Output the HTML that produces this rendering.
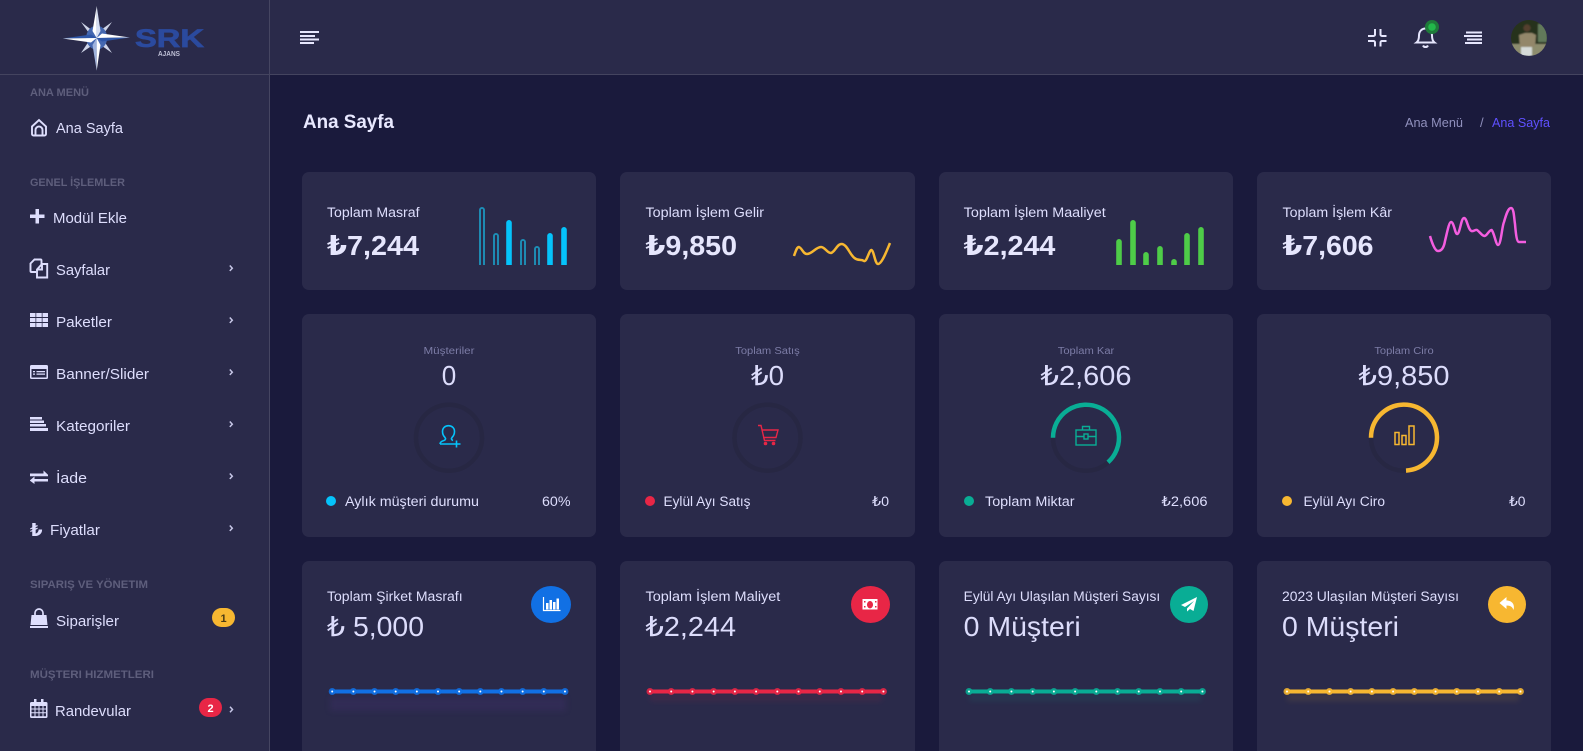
<!DOCTYPE html>
<html lang="tr"><head><meta charset="utf-8"><title>Ana Sayfa</title>
<style>
html,body{margin:0;padding:0;width:1583px;height:751px;overflow:hidden;background:#1a1a3c}
body{position:relative;font-family:"Liberation Sans","DejaVu Sans",sans-serif}
.side{position:absolute;left:0;top:0;width:269px;height:751px;background:#2a2a4a;border-right:1px solid rgba(255,255,255,.13)}
.head{position:absolute;left:270px;top:0;width:1313px;height:74px;background:#2a2a4a}
.hl{position:absolute;left:0;top:74px;width:1583px;height:1px;background:#44445f}
.c{position:absolute;background:#2a2a4a;border-radius:7px}
svg{position:absolute;left:0;top:0}
text{font-family:"Liberation Sans","DejaVu Sans",sans-serif;fill:#dedefd}
.s{font-size:14.5px}.sec{font-size:11px;font-weight:700;fill:#5e5e7c}
.t{font-size:13.5px}.v{font-size:28px;font-weight:700;fill:#e6e6fd}.n{font-size:28px;fill:#dcdcfb}
.l{font-size:10px;fill:#7c7ca6}
</style></head><body>
<div class="side"></div><div class="head"></div><div class="hl"></div>
<div class="c" style="left:302px;top:172px;width:294px;height:118px"></div>
<div class="c" style="left:620px;top:172px;width:295px;height:118px"></div>
<div class="c" style="left:939px;top:172px;width:294px;height:118px"></div>
<div class="c" style="left:1257px;top:172px;width:294px;height:118px"></div>
<div class="c" style="left:302px;top:314px;width:294px;height:223px"></div>
<div class="c" style="left:620px;top:314px;width:295px;height:223px"></div>
<div class="c" style="left:939px;top:314px;width:294px;height:223px"></div>
<div class="c" style="left:1257px;top:314px;width:294px;height:223px"></div>
<div class="c" style="left:302px;top:561px;width:294px;height:200px"></div>
<div class="c" style="left:620px;top:561px;width:295px;height:200px"></div>
<div class="c" style="left:939px;top:561px;width:294px;height:200px"></div>
<div class="c" style="left:1257px;top:561px;width:294px;height:200px"></div>
<svg width="1583" height="751" viewBox="0 0 1583 751" xmlns="http://www.w3.org/2000/svg">
<defs>
<clipPath id="bc"><rect x="470" y="200" width="800" height="65"/></clipPath>
<clipPath id="av"><circle cx="1529" cy="38" r="18"/></clipPath>
<filter id="bl" x="-20%" y="-100%" width="140%" height="300%"><feGaussianBlur stdDeviation="3"/></filter>
<filter id="av1" x="-10%" y="-10%" width="120%" height="120%"><feGaussianBlur stdDeviation=".8"/></filter>
</defs>

<!-- logo -->
<g>
<g fill="#cfd5e8"><polygon points="81,22 97,34 94,40"/><polygon points="112,22 100,39 94,35"/><polygon points="81,53 93,35 99,41"/><polygon points="112,53 95,41 100,35"/></g>
<ellipse cx="96.700" cy="37.700" rx="10.500" ry="12" fill="#4467b0"/>
<polygon points="96.700,6 92.500,31 96.700,38" fill="#fff"/><polygon points="96.700,6 100.500,31 96.700,38" fill="#d5def2"/>
<polygon points="96.700,70.600 92.500,45 96.700,38" fill="#9fb3dd"/><polygon points="96.700,70.600 100.500,45 96.700,38" fill="#fff"/>
<polygon points="62.700,38.500 91,34.500 96.700,38" fill="#2e56a8"/><polygon points="62.700,38.500 91,42.500 96.700,38" fill="#fff"/>
<polygon points="130,37.500 102,33.500 96.700,38" fill="#fff"/><polygon points="130,37.500 102,41.500 96.700,38" fill="#2e56a8"/>
</g>
<text x="135" y="47" font-size="25" font-weight="700" textLength="69" lengthAdjust="spacingAndGlyphs" style="fill:#2b4a9e;stroke:#2b4a9e;stroke-width:.7">SRK</text>
<text x="158" y="56" font-size="7" font-weight="700" textLength="22" lengthAdjust="spacingAndGlyphs" style="fill:#bfc0d6">AJANS</text>

<!-- sidebar text -->
<text class="sec" x="30" y="96" textLength="59" lengthAdjust="spacingAndGlyphs">ANA MENÜ</text>
<text class="s" x="56" y="133" textLength="67" lengthAdjust="spacingAndGlyphs">Ana Sayfa</text>
<text class="sec" x="30" y="186" textLength="95" lengthAdjust="spacingAndGlyphs">GENEL İŞLEMLER</text>
<text class="s" x="53" y="223" textLength="74" lengthAdjust="spacingAndGlyphs">Modül Ekle</text>
<text class="s" x="56" y="275" textLength="54" lengthAdjust="spacingAndGlyphs">Sayfalar</text>
<text class="s" x="56" y="327" textLength="56" lengthAdjust="spacingAndGlyphs">Paketler</text>
<text class="s" x="56" y="379" textLength="93" lengthAdjust="spacingAndGlyphs">Banner/Slider</text>
<text class="s" x="56" y="431" textLength="74" lengthAdjust="spacingAndGlyphs">Kategoriler</text>
<text class="s" x="56" y="483" textLength="31" lengthAdjust="spacingAndGlyphs">İade</text>
<text class="s" x="50" y="535" textLength="50" lengthAdjust="spacingAndGlyphs">Fiyatlar</text>
<text class="sec" x="30" y="588" textLength="118" lengthAdjust="spacingAndGlyphs">SIPARIŞ VE YÖNETIM</text>
<text class="s" x="56" y="626" textLength="63" lengthAdjust="spacingAndGlyphs">Siparişler</text>
<text class="sec" x="30" y="678" textLength="124" lengthAdjust="spacingAndGlyphs">MÜŞTERI HIZMETLERI</text>
<text class="s" x="55" y="716" textLength="76" lengthAdjust="spacingAndGlyphs">Randevular</text>

<!-- sidebar icons -->
<g fill="none" stroke="#dedefd" stroke-width="1.900">
<path d="M32 126.500 39 120l7 6.500V134a1.500 1.500 0 0 1-1.500 1.500h-11A1.500 1.500 0 0 1 32 134Z"/>
<path d="M35.500 135.500V130a3.500 3.500 0 0 1 7 0v5.500"/>
<path d="M36 272h-4.500a1 1 0 0 1-1-1v-7.500l4-4h6a1 1 0 0 1 1 1V264"/>
<path d="M37 269.500l5-5.500h5.200v13.500H37ZM42 264v5.500h-5"/>
<path d="M229.800 265.500l2.500 2.700-2.500 2.700M229.800 317.500l2.500 2.700-2.500 2.700M229.800 369.500l2.500 2.700-2.500 2.700M229.800 421.500l2.500 2.700-2.500 2.700M229.800 473.500l2.500 2.700-2.500 2.700M229.800 525.500l2.500 2.700-2.500 2.700M230 706.800l2.500 2.700-2.500 2.700" stroke="#c6c6e6" stroke-width="1.500"/>
</g>
<g fill="#dedefd">
<path d="M35.500 209h3.500v5.500h5.500v3.500H39v5.500h-3.500V218H30v-3.500h5.500Z"/>
<path d="M30 313h5.500v4H30zM36.250 313h5.500v4h-5.500zM42.500 313H48v4h-5.500zM30 318h5.500v4H30zM36.250 318h5.500v4h-5.500zM42.500 318H48v4h-5.500zM30 323h5.500v4H30zM36.250 323h5.500v4h-5.500zM42.500 323H48v4h-5.500z"/>
<path fill-rule="evenodd" d="M31.500 365h15a1.500 1.500 0 0 1 1.500 1.500v11a1.500 1.500 0 0 1-1.500 1.500h-15a1.500 1.500 0 0 1-1.500-1.500v-11a1.500 1.500 0 0 1 1.500-1.500ZM31.500 369v8.500h15V369ZM33 371h2v1.200h-2zM36.500 371H45v1.200h-8.500zM33 373.500h2v1.200h-2zM36.500 373.500H45v1.200h-8.500z"/>
<path d="M30 417h12v2.500H30zM30 420.500h14v2.500H30zM30 424h16v2.500H30zM30 428h18v3H30z"/>
<path d="M30 473.500H43.500V470.500L48 474.700V476.200H30ZM48 479H34.500V476.500L30 480.200V480.700L34.500 484V481.500H48Z"/>
<path d="M31.500 615h15l1 10H30.500ZM30 626h18v2H30z"/>
<path d="M35 615v-2a4 4 0 0 1 8 0v2" fill="none" stroke="#dedefd" stroke-width="1.700"/>
<path fill-rule="evenodd" d="M31.500 702H34v-3h2.500v3h4.500v-3h2.500v3h2.500a1.500 1.500 0 0 1 1.500 1.500v13a1.500 1.500 0 0 1-1.500 1.500h-14.500a1.500 1.500 0 0 1-1.500-1.500v-13a1.500 1.500 0 0 1 1.500-1.500ZM31.500 706v2.500h3V706Zm4 0v2.500h3V706Zm4 0v2.500h3V706Zm4 0v2.500h2.500V706Zm-12 3.500v2.800h3v-2.800Zm4 0v2.800h3v-2.800Zm4 0v2.800h3v-2.800Zm4 0v2.800h2.500v-2.800Zm-12 3.800v3h3v-3Zm4 0v3h3v-3Zm4 0v3h3v-3Zm4 0v3h2.500v-3Z"/>
</g>
<text x="30" y="536" font-size="18" font-weight="700">₺</text>
<rect x="212" y="608" width="23" height="19" rx="9.500" fill="#f7b731"/>
<text x="223.500" y="622" font-size="11" font-weight="700" text-anchor="middle" style="fill:#4a3a14">1</text>
<rect x="199" y="698" width="23" height="19" rx="9.500" fill="#e82646"/>
<text x="210.500" y="712" font-size="11" font-weight="700" text-anchor="middle" style="fill:#fff">2</text>

<!-- header icons -->
<g stroke="#e6e6fd" stroke-width="2" fill="none">
<path d="M300 32h19M300 36h15M300 39.500h19M300 43h14"/>
<path d="M1466 32.500h16M1464 36h18M1467 39.500h15M1465 43h17"/>
<path d="M1375 29v5.500a1.500 1.500 0 0 1-1.500 1.500H1368M1380.500 29v5.500a1.500 1.500 0 0 0 1.500 1.500h4.500M1368 41h5.500a1.500 1.500 0 0 1 1.500 1.500V46.500M1386.500 41H1382a1.500 1.500 0 0 0-1.500 1.500V46.500"/>
<path d="M1416.500 42.500c2-1.500 2.500-3.500 2.500-7 0-4 2.700-7 6.500-7s6.500 3 6.500 7c0 3.500.5 5.500 2.500 7ZM1423 45.500a2.800 2.800 0 0 0 5 0"/>
</g>
<circle cx="1432" cy="27" r="7" fill="#1f7a3a"/><circle cx="1432" cy="27" r="3.800" fill="#22b84a"/>
<g clip-path="url(#av)"><g filter="url(#av1)">
<rect x="1509" y="18" width="40" height="40" fill="#27301f"/>
<rect x="1538" y="24" width="9" height="18" fill="#62795a"/>
<rect x="1511" y="44" width="36" height="12" fill="#8d8d6e"/>
<circle cx="1527" cy="28" r="3.600" fill="#54402f"/>
<path d="M1519 35l6-2h7l4 2-1 12h-15z" fill="#93876a"/>
<rect x="1521" y="47" width="11" height="9" fill="#d6dbd9"/>
</g></g>

<!-- page title -->
<text x="303" y="128" font-size="19" font-weight="700" textLength="91" lengthAdjust="spacingAndGlyphs" style="fill:#e8e8ff">Ana Sayfa</text>
<text x="1405" y="127" font-size="13" textLength="58" lengthAdjust="spacingAndGlyphs" style="fill:#9090bd">Ana Menü</text>
<text x="1480" y="127" font-size="13" style="fill:#9090bd">/</text>
<text x="1492" y="127" font-size="13" textLength="58" lengthAdjust="spacingAndGlyphs" style="fill:#5f50ff">Ana Sayfa</text>

<!-- row 1 -->
<text class="t" x="327" y="217" textLength="92.500" lengthAdjust="spacingAndGlyphs">Toplam Masraf</text>
<text class="t" x="645.500" y="217" textLength="118.500" lengthAdjust="spacingAndGlyphs">Toplam İşlem Gelir</text>
<text class="t" x="963.700" y="217" textLength="142" lengthAdjust="spacingAndGlyphs">Toplam İşlem Maaliyet</text>
<text class="t" x="1282.500" y="217" textLength="109.500" lengthAdjust="spacingAndGlyphs">Toplam İşlem Kâr</text>
<text class="v" x="327" y="255" textLength="92" lengthAdjust="spacingAndGlyphs">₺7,244</text>
<text class="v" x="645.500" y="255" textLength="91.500" lengthAdjust="spacingAndGlyphs">₺9,850</text>
<text class="v" x="963.700" y="255" textLength="91.700" lengthAdjust="spacingAndGlyphs">₺2,244</text>
<text class="v" x="1282.500" y="255" textLength="91" lengthAdjust="spacingAndGlyphs">₺7,606</text>

<g clip-path="url(#bc)">
<g fill="none" stroke="#1d8fb8" stroke-width="1.900">
<rect x="480" y="207.900" width="4" height="64" rx="2"/>
<rect x="494" y="233.900" width="4" height="40" rx="2"/>
<rect x="521" y="239.900" width="4" height="40" rx="2"/>
<rect x="535" y="246.900" width="4" height="40" rx="2"/>
</g>
<g fill="#05c3fb">
<rect x="506.200" y="220" width="5.600" height="50" rx="2.800"/>
<rect x="547.200" y="233" width="5.600" height="40" rx="2.800"/>
<rect x="561.200" y="227" width="5.600" height="45" rx="2.800"/>
</g>
<g fill="#4ecc48">
<rect x="1116.200" y="239" width="5.600" height="30" rx="2.800"/>
<rect x="1130.200" y="220" width="5.600" height="50" rx="2.800"/>
<rect x="1143.200" y="252" width="5.600" height="20" rx="2.800"/>
<rect x="1157.200" y="246" width="5.600" height="25" rx="2.800"/>
<rect x="1171.200" y="259" width="5.600" height="15" rx="2.800"/>
<rect x="1184.200" y="233" width="5.600" height="40" rx="2.800"/>
<rect x="1198.200" y="227" width="5.600" height="45" rx="2.800"/>
</g>
</g>
<path d="M794 256C796 250 797 247 799 247 802 248 803 254 807 254 812 254 816 247 821 247 825 247 827 253 831 253 835 252 837 244 841.500 244 847 244 850 255 854.500 258 858 261 861 259 864 261 867 262 869 250 871.500 250 874 251 875 264 878 264 882 264 887 250 890 243" fill="none" stroke="#f7b731" stroke-width="2.500"/>
<path d="M1430 236C1432 243 1435 251 1438 251 1442 251 1444 247 1445 241 1447 233 1449 222 1451 222 1454 222 1455 234 1457 234 1460 234 1461 218 1464 218 1467 218 1468 230 1471.500 231 1474 232 1475 229 1477 230 1480 232 1482 236 1484.500 236 1487 236 1489 230 1491.600 230 1494 232 1496 245 1498 245 1501 245 1502 226 1504 222 1506 215 1508 208 1511 208 1514 208 1514 218 1515 224 1516 236 1517 242 1519 242L1526 242" fill="none" stroke="#f45de0" stroke-width="2.500"/>

<!-- row 2 -->
<text class="l" x="449" y="354" text-anchor="middle" textLength="51" lengthAdjust="spacingAndGlyphs">Müşteriler</text>
<text class="l" x="767.500" y="354" text-anchor="middle" textLength="64.500" lengthAdjust="spacingAndGlyphs">Toplam Satış</text>
<text class="l" x="1086" y="354" text-anchor="middle" textLength="56.500" lengthAdjust="spacingAndGlyphs">Toplam Kar</text>
<text class="l" x="1404" y="354" text-anchor="middle" textLength="59.300" lengthAdjust="spacingAndGlyphs">Toplam Ciro</text>
<text class="n" x="449" y="385" text-anchor="middle" textLength="14.500" lengthAdjust="spacingAndGlyphs">0</text>
<text class="n" x="767.500" y="385" text-anchor="middle" textLength="33" lengthAdjust="spacingAndGlyphs">₺0</text>
<text class="n" x="1086" y="385" text-anchor="middle" textLength="91" lengthAdjust="spacingAndGlyphs">₺2,606</text>
<text class="n" x="1404" y="385" text-anchor="middle" textLength="91" lengthAdjust="spacingAndGlyphs">₺9,850</text>

<g fill="none" stroke="#272743" stroke-width="4.500">
<circle cx="449" cy="437.700" r="33"/><circle cx="767.500" cy="437.700" r="33"/><circle cx="1086" cy="437.700" r="33"/><circle cx="1404" cy="437.700" r="33"/>
</g>
<path d="M1053 437.700A33 33 0 1 1 1108 462.300" fill="none" stroke="#09ad95" stroke-width="4.500"/>
<path d="M1371 437.700A33 33 0 1 1 1406 470.600" fill="none" stroke="#f7b731" stroke-width="4.500"/>

<g fill="none" stroke-width="1.400">
<g stroke="#05c3fb" stroke-width="1.600">
<path d="M440 444c0-2 1.500-2.800 4-3.500 1.500-.5 2-1.800 1-3-1.500-1.500-2.500-3.500-2.500-6 0-3.500 2.500-5.800 6-5.800s6 2.300 6 5.800c0 2.500-1 4.500-2.500 6-1 1.200-.5 2.500 1 3"/>
<path d="M440 444h15M456.500 440.500v7M453 444h7.500"/>
</g>
<g stroke="#e82646">
<path d="M758 425.500h3l3.500 15h11M762 430h16l-2 7.500h-13"/>
<circle cx="765.500" cy="443.500" r="1.100" fill="#e82646"/><circle cx="773.500" cy="443.500" r="1.100" fill="#e82646"/>
</g>
<g stroke="#09ad95">
<rect x="1076" y="430" width="20" height="15"/>
<path d="M1082.500 430v-3.500h7v3.500M1076 436.500h8M1088 436.500h8"/><rect x="1084" y="434" width="4" height="5"/>
</g>
<g stroke="#f7b731" stroke-width="1.500">
<rect x="1395" y="432.500" width="4" height="12"/><rect x="1402" y="435.500" width="4" height="9"/><rect x="1409" y="426" width="5" height="18.500"/>
</g>
</g>

<circle cx="331" cy="501" r="5" fill="#05c3fb"/><circle cx="650" cy="501" r="5" fill="#e82646"/><circle cx="969" cy="501" r="5" fill="#09ad95"/><circle cx="1287" cy="501" r="5" fill="#f7b731"/>
<text class="t" x="345" y="506" textLength="134" lengthAdjust="spacingAndGlyphs">Aylık müşteri durumu</text>
<text class="t" x="663.500" y="506" textLength="87" lengthAdjust="spacingAndGlyphs">Eylül Ayı Satış</text>
<text class="t" x="985" y="506" textLength="89.500" lengthAdjust="spacingAndGlyphs">Toplam Miktar</text>
<text class="t" x="1303.500" y="506" textLength="81.500" lengthAdjust="spacingAndGlyphs">Eylül Ayı Ciro</text>
<text class="t" x="542" y="506" textLength="28.500" lengthAdjust="spacingAndGlyphs">60%</text>
<text class="t" x="872" y="506" textLength="17" lengthAdjust="spacingAndGlyphs">₺0</text>
<text class="t" x="1161.500" y="506" textLength="46" lengthAdjust="spacingAndGlyphs">₺2,606</text>
<text class="t" x="1509" y="506" textLength="16.500" lengthAdjust="spacingAndGlyphs">₺0</text>

<!-- row 3 -->
<text class="t" x="327" y="601" textLength="135.600" lengthAdjust="spacingAndGlyphs">Toplam Şirket Masrafı</text>
<text class="t" x="645.500" y="601" textLength="134.800" lengthAdjust="spacingAndGlyphs">Toplam İşlem Maliyet</text>
<text class="t" x="963.700" y="601" textLength="196.500" lengthAdjust="spacingAndGlyphs">Eylül Ayı Ulaşılan Müşteri Sayısı</text>
<text class="t" x="1282" y="601" textLength="177" lengthAdjust="spacingAndGlyphs">2023 Ulaşılan Müşteri Sayısı</text>
<text class="n" x="327" y="636" textLength="97" lengthAdjust="spacingAndGlyphs">₺ 5,000</text>
<text class="n" x="645.500" y="636" textLength="90.500" lengthAdjust="spacingAndGlyphs">₺2,244</text>
<text class="n" x="963.700" y="636" textLength="117" lengthAdjust="spacingAndGlyphs">0 Müşteri</text>
<text class="n" x="1282" y="636" textLength="117" lengthAdjust="spacingAndGlyphs">0 Müşteri</text>

<ellipse cx="551" cy="604.500" rx="20" ry="18.500" fill="#1170e4"/>
<ellipse cx="870.500" cy="604.500" rx="19.500" ry="18.500" fill="#e82646"/>
<ellipse cx="1189" cy="604.500" rx="19" ry="18.500" fill="#09ad95"/>
<ellipse cx="1507" cy="604.500" rx="19" ry="18.500" fill="#f7b731"/>

<path d="M543.500 597v13.500h17" fill="none" stroke="#fff" stroke-width="1.200"/>
<path d="M546 603h2.500v6.500H546zM549.500 600h2.500v9.500h-2.500zM553 602h2.500v7.500H553zM556.500 598.500h2.500v11h-2.500z" fill="#fff"/>
<path fill-rule="evenodd" d="M862.500 599h15v10.500h-15ZM870 601a3 3.700 0 1 0 .01 0ZM864 601v1.500h1.500V601ZM875 601v1.500h1.500V601ZM864 606v1.500h1.500V606ZM875 606v1.500h1.500V606Z" fill="#fff"/>
<rect x="869.300" y="602.800" width="1.500" height="4" fill="#e82646"/>
<path d="M1197 597l-16 8 4 2 9-6-7 7.500v3l3-2.500 3.500 2Z" fill="#fff"/>
<path d="M1506.500 597l-7 6 7 6v-3.500c4 0 6 1.500 7 4.500 1.500-5-1-9.500-7-9.500Z" fill="#fff"/>

<!-- line charts -->
<rect x="330" y="697" width="236" height="14" fill="#3a2f63" opacity=".45" filter="url(#bl)"/>
<rect x="650" y="694" width="232" height="7" fill="#e82646" opacity=".1" filter="url(#bl)"/>
<rect x="969" y="694" width="232" height="7" fill="#09ad95" opacity=".1" filter="url(#bl)"/>
<rect x="1287" y="694" width="232" height="7" fill="#f7b731" opacity=".1" filter="url(#bl)"/>
<g fill="none" stroke-linecap="round">
<path d="M332.200 691.500H565" stroke="#1170e4" stroke-width="4"/>
<path d="M332.200 691.500H565.500" stroke="#1170e4" stroke-width="7" stroke-dasharray="0 21.160" opacity=".85"/>
<path d="M332.200 691.500H565.500" stroke="#fff" stroke-width="2" stroke-dasharray="0 21.160"/>
<path d="M650 691.500H883.400" stroke="#e82646" stroke-width="4"/>
<path d="M650 691.500H883.800" stroke="#e82646" stroke-width="7" stroke-dasharray="0 21.220" opacity=".85"/>
<path d="M650 691.500H883.800" stroke="#fff" stroke-width="2" stroke-dasharray="0 21.220"/>
<path d="M969 691.500H1202.300" stroke="#09ad95" stroke-width="4"/>
<path d="M969 691.500H1202.800" stroke="#09ad95" stroke-width="7" stroke-dasharray="0 21.220" opacity=".85"/>
<path d="M969 691.500H1202.800" stroke="#fff" stroke-width="2" stroke-dasharray="0 21.220"/>
<path d="M1287 691.500H1520.300" stroke="#f7b731" stroke-width="4"/>
<path d="M1287 691.500H1520.800" stroke="#f7b731" stroke-width="7" stroke-dasharray="0 21.220" opacity=".85"/>
<path d="M1287 691.500H1520.800" stroke="#fff" stroke-width="2" stroke-dasharray="0 21.220"/>
</g>
</svg>
</body></html>
